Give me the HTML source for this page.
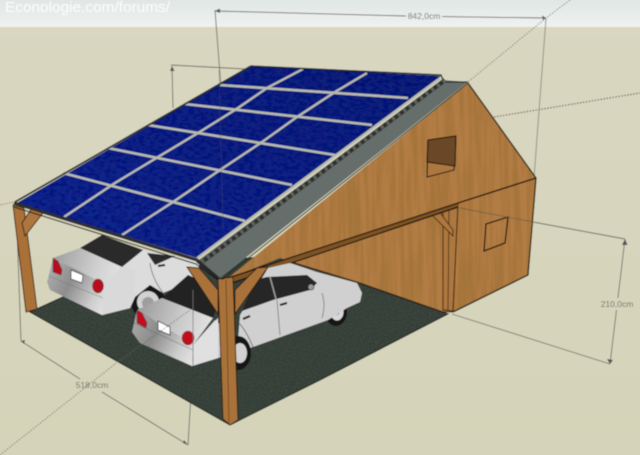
<!DOCTYPE html>
<html><head><meta charset="utf-8"><style>
html,body{margin:0;padding:0;background:#d7d5bd}
svg{display:block;width:640px;height:455px;overflow:hidden}
text{font-family:"Liberation Sans",sans-serif}
</style></head><body>
<svg width="640" height="455" viewBox="0 0 640 455" xmlns="http://www.w3.org/2000/svg">
<defs>
<linearGradient id="sky" x1="0" y1="0" x2="0" y2="1"><stop offset="0" stop-color="#dde4e3"/><stop offset="1" stop-color="#eff2ef"/></linearGradient>
<linearGradient id="gnd" x1="0" y1="0" x2="0" y2="1"><stop offset="0" stop-color="#d9d7c0"/><stop offset="1" stop-color="#d5d3b9"/></linearGradient>
<linearGradient id="pan" x1="0" y1="1" x2="1" y2="0"><stop offset="0" stop-color="#0c2a90"/><stop offset=".5" stop-color="#0a2382"/><stop offset="1" stop-color="#091f76"/></linearGradient>
<linearGradient id="rear1" gradientUnits="userSpaceOnUse" x1="47" y1="280" x2="110" y2="315"><stop offset="0" stop-color="#a8a8a8"/><stop offset=".3" stop-color="#8d8d8d"/><stop offset=".7" stop-color="#cfcfcf"/><stop offset="1" stop-color="#ececec"/></linearGradient>
<linearGradient id="rear2" gradientUnits="userSpaceOnUse" x1="132" y1="330" x2="196" y2="365"><stop offset="0" stop-color="#a4a4a4"/><stop offset=".3" stop-color="#8b8b8b"/><stop offset=".7" stop-color="#cdcdcd"/><stop offset="1" stop-color="#eaeaea"/></linearGradient>
<linearGradient id="trunk1" gradientUnits="userSpaceOnUse" x1="55" y1="258" x2="120" y2="280"><stop offset="0" stop-color="#a0a0a0"/><stop offset=".6" stop-color="#cfcfcf"/><stop offset="1" stop-color="#e4e4e4"/></linearGradient>
<linearGradient id="trunk2" gradientUnits="userSpaceOnUse" x1="140" y1="305" x2="210" y2="330"><stop offset="0" stop-color="#9c9c9c"/><stop offset=".6" stop-color="#cccccc"/><stop offset="1" stop-color="#e2e2e2"/></linearGradient>
<filter id="woodf" x="0" y="0" width="100%" height="100%"><feTurbulence type="fractalNoise" baseFrequency="0.22 0.012" numOctaves="3" seed="7"/><feColorMatrix type="matrix" values="0 0 0 0 .30  0 0 0 0 .15  0 0 0 0 .03  3 0 0 0 -1.150"/></filter>
<filter id="noise" x="0" y="0" width="100%" height="100%"><feTurbulence type="fractalNoise" baseFrequency="0.18 0.3" numOctaves="2" seed="3"/><feColorMatrix type="matrix" values="0 0 0 0 0  0 0 0 0 0  0 0 0 0 .18  3 0 0 0 -1.100"/></filter>
<filter id="gnoise" x="0" y="0" width="100%" height="100%"><feTurbulence type="fractalNoise" baseFrequency="0.8" numOctaves="2" seed="5"/><feColorMatrix type="matrix" values="0 0 0 0 .5  0 0 0 0 .55  0 0 0 0 .5  1.400 0 0 0 -.6"/></filter>
<filter id="soft" x="-2%" y="-2%" width="104%" height="104%"><feGaussianBlur stdDeviation="0.55"/></filter>
<clipPath id="wallc"><path d="M468 83L536 178L528 275L453 312L443 312L360 283L280 258L227 279Z"/></clipPath>
<clipPath id="panc"><path d="M251 66L441 76L197 258L17 203Z"/></clipPath>
<clipPath id="floorc"><path d="M30 312L65 296L190 262L280 256L448 314L320 380L230 425Z"/></clipPath>
</defs>

<g filter="url(#soft)">
<rect x="-5" y="26" width="650" height="435" fill="url(#gnd)"/>
<rect x="-5" y="-5" width="650" height="32" fill="url(#sky)"/>

<g fill="none" stroke="#6e6e66" stroke-width=".9">
<path d="M215 10L222 100"/>
<path d="M215 11L406 16M442 16.600L546 18"/>
<path d="M171 65L245 69M172 66L173 108"/>
<path d="M546 18L534 178" stroke="#8a8a80"/>
<path d="M17 227L21 341"/>
<path d="M21 341L80 379M102 392L188 445"/>
<path d="M193 360L188 445"/>
<path d="M533 222L625 239"/>
<path d="M625 239L610 364"/>
<path d="M452 314L610 364"/>
</g>
<g fill="none" stroke="#77776c" stroke-width=".9" stroke-dasharray="1.500 1.500">
<path d="M570 0L546 18L468 82"/>
<path d="M494 117L640 93" stroke-width="1.200" stroke="#66665c"/>
<path d="M0 455L115 364"/>
<path d="M0 205L14 202"/>
</g>
<g fill="#555"><path d="M215 11L220 8.500L220 13Z"/><path d="M546 18L542 15.500L543 20Z"/><path d="M172 66L170 71L174.500 71Z"/><path d="M21 341L24 344L25 340Z"/><path d="M188 445L184 440L183 443Z"/><path d="M625 239L622 245L627.500 245Z"/><path d="M610 364L607 359L613 360Z"/></g>
<text x="424" y="19" font-size="8.500" fill="#6f7272" text-anchor="middle">842,0cm</text>
<text x="92" y="388" font-size="8.500" fill="#6f6f66" text-anchor="middle">518,0cm</text>
<rect x="604" y="298" width="30" height="12" fill="#d6d4bb"/>
<text x="617" y="307" font-size="8.500" fill="#6f6f66" text-anchor="middle">210,0cm</text>
<text x="5" y="12" font-size="15" fill="#ffffff" textLength="165" lengthAdjust="spacingAndGlyphs" opacity=".95">Econologie.com/forums/</text>

<!-- floor -->
<path d="M30 312L65 296L190 262L280 256L448 314L320 380L230 425Z" fill="#323c35" stroke="#1a1f1b" stroke-width="1"/>
<g clip-path="url(#floorc)"><rect x="20" y="250" width="440" height="180" filter="url(#gnoise)" opacity=".3"/></g>

<!-- wood wall -->
<path d="M468 83L536 178L528 275L453 312L443 312L360 283L280 258L227 279Z" fill="#b27c44"/>
<g clip-path="url(#wallc)"><rect x="220" y="80" width="320" height="240" filter="url(#woodf)" opacity=".5"/></g>
<g fill="none" stroke="#1e140a" stroke-width="1.300"><path d="M468 83L536 178L528 275L453 312"/></g>
<path d="M453 312L443 312L360 283L285 260" fill="none" stroke="#2f2012" stroke-width="1"/>

<!-- post and brace at rear -->
<path d="M443 209L458 204L453 311L443 310Z" fill="#ad773f" stroke="#2a1a0c" stroke-width="1"/>
<path d="M449 208L448 311" stroke="#3a2510" stroke-width=".8"/>
<path d="M430 213L438 210L453 230L453 236Z" fill="#ad773f" stroke="#2a1a0c" stroke-width=".8"/>

<!-- side window -->
<path d="M486 224L508 217L505 243L484 251Z" fill="none" stroke="#241608" stroke-width="1.300"/>
<!-- gable window -->
<path d="M428 140L456 136L454 170L427 177Z" fill="#ad7840" stroke="#1e140a" stroke-width="1.100"/>
<path d="M428 140L456 136L455 166L427 162Z" fill="#6b4725" stroke="#1e140a" stroke-width="1.100"/>

<!-- eave beam -->
<path d="M536 178L458 203" stroke="#1b1108" stroke-width="1.400" fill="none"/>
<path d="M458 203L227 279L229 283L458 208Z" fill="#7c5226"/>
<path d="M458 203L225 279M458 207L232 283" stroke="#1b1108" stroke-width="1.200" fill="none"/>

<!-- car 1 -->
<circle cx="148" cy="302" r="17" fill="#161616"/><circle cx="148" cy="302" r="11" fill="#d2d2d2"/><circle cx="148" cy="303" r="6" fill="#9e9e9e"/>
<path d="M122 267L143 250L200 262L195 280L163 293L150 285L135 297L130 308L102 315L50 290L47 282L53 258Z" fill="#dcdcdc"/>
<path d="M147 253L175 256L155 265Z" fill="#2c2c2c"/>
<path d="M150 263Q152 278 163 293" stroke="#555" stroke-width=".7" fill="none"/>
<path d="M158 266L165 265" stroke="#222" stroke-width="2"/>
<path d="M80 248L102 235L143 250L122 267Z" fill="#2a2a2a"/>
<path d="M53 258L80 248L122 267L103 283Z" fill="url(#trunk1)"/>
<path d="M53 258L103 283L102 315L50 290L47 282Z" fill="url(#rear1)"/>
<path d="M103 283L122 267L135 270L135 297L130 308L102 315Z" fill="#d9d9d9"/>
<path d="M49 276L103 298" fill="none" stroke="#777" stroke-width=".5"/>
<path d="M53 258L58 261L62 270L61 275L53 272Z" fill="#b70f1e" stroke="#333" stroke-width=".5"/>
<ellipse cx="98" cy="286" rx="5.500" ry="7" fill="#b70f1e" stroke="#333" stroke-width=".5"/>
<path d="M71 270L83 275L82 283L71 279Z" fill="#fff" stroke="#333" stroke-width=".7"/>

<!-- car 2 -->
<ellipse cx="336" cy="312" rx="11" ry="14" fill="#161616"/><ellipse cx="337" cy="312" rx="6.500" ry="8.500" fill="#d8d8d8"/><circle cx="337" cy="312" r="3" fill="#a4a4a4"/>
<path d="M238 340L240 315L268 268L290 263L317 272L357 283L362 293L360 302L347 308L328 320L253 347L218 358L192 366L193 345L215 320Z" fill="#d0d0d0"/>
<ellipse cx="238" cy="353" rx="13" ry="17" fill="#161616"/><ellipse cx="240" cy="353" rx="7" ry="10" fill="#d2d2d2"/>
<path d="M238 322Q246 330 253 347" stroke="#555" stroke-width=".8" fill="none"/>
<path d="M242 311L255 280L267 277L307 275L317 283L310 290L273 300Z" fill="#262626"/>
<path d="M270 277L276 299" stroke="#999" stroke-width="1.500"/>
<path d="M277 300L280 335M322 293Q326 305 322 318" stroke="#666" stroke-width=".7" fill="none"/>
<path d="M243 319L250 316M280 305L287 303" stroke="#222" stroke-width="2.200"/>
<circle cx="311" cy="287" r="3" fill="#999" stroke="#222" stroke-width=".6"/>
<path d="M162 298L188 275L222 290L213 318Z" fill="#232323"/>
<path d="M137 310L162 298L213 318L193 345Z" fill="url(#trunk2)"/>
<path d="M137 310L193 345L192 366L140 343L132 332Z" fill="url(#rear2)"/>
<path d="M193 345L218 318L218 358L192 366Z" fill="#e0e0e0"/>
<path d="M137 310L142 313L147 323L146 328L137 323Z" fill="#c20e1f" stroke="#333" stroke-width=".5"/>
<ellipse cx="188" cy="338" rx="6" ry="7" fill="#c20e1f" stroke="#333" stroke-width=".5"/>
<path d="M158 321L170 327L170 335L158 330Z" fill="#fff" stroke="#333" stroke-width=".8"/>
<path d="M134 323L193 350" stroke="#666" stroke-width=".5" fill="none"/>
<path d="M115 364L190 310" stroke="#66665e" stroke-width=".7" stroke-dasharray="1.500 1.500" fill="none"/>
<path d="M193 366L193 290" stroke="#777" stroke-width=".7"/>

<!-- left post -->
<path d="M13 205L24 208L37 309L26 312Z" fill="#a97038" stroke="#2a1a0c" stroke-width=".9"/>
<path d="M43 213L32 208L22 223L25 236Z" fill="#ad7540" stroke="#2a1a0c" stroke-width=".9"/>
<!-- front post & braces -->
<path d="M187 267L199 268L218 290L218 314Z" fill="#a9723a" stroke="#2a1a0c" stroke-width=".9"/>
<path d="M268 267L257 268L235 290L235 314Z" fill="#a9723a" stroke="#2a1a0c" stroke-width=".9"/>
<path d="M218 279L233 277L238 420L230 425L223 419Z" fill="#a9723a" stroke="#2a1a0c" stroke-width=".9"/>
<path d="M226 280L229 423" stroke="#6c4217" stroke-width=".8"/>

<!-- gray strip -->
<path d="M443 80L468 82L220 278L196 262Z" fill="#666e6c"/>
<path d="M443 82L468 82" stroke="#222" stroke-width="1.200"/>
<path d="M468 83L222 279" stroke="#2a2a22" stroke-width="1"/>

<!-- panels -->
<path d="M251 66L441 76L197 258L17 203Z" fill="url(#pan)"/>
<g clip-path="url(#panc)"><rect x="10" y="60" width="440" height="205" filter="url(#noise)" opacity=".45"/></g>
<g fill="none" stroke="#b7b9b0" stroke-width="2.600">
<path d="M220 85L408 98M185 104L372 125M148 125L335 155M108 148L292 185M63 173L245 221"/>
<path d="M303 69L267 88L238 108L198 133L158 157L115 183L64 217" stroke-width="2.300"/>
<path d="M367 73L335 92L297 117L262 142L220 170L173 202L122 235" stroke-width="2.300"/>
<path d="M440 78L197 258" stroke-width="2.200"/>
</g>
<!-- hatched band -->
<path d="M445 80L202 262" stroke="#2e302e" stroke-width="4.500" fill="none"/>
<path d="M445 80L202 262" stroke="#5f625e" stroke-width="4" fill="none" stroke-dasharray="3 4"/>
<!-- roof edges -->
<path d="M251 66L441 75L443 80" stroke="#222" stroke-width="1.400" fill="none"/>
<path d="M251 66L15 202" stroke="#2c2c2c" stroke-width="1.800" fill="none"/>
<path d="M14 203L197 260L218 278" stroke="#2f2f2f" stroke-width="3.200" fill="none"/>
<path d="M14 207L196 264L218 280" stroke="#111" stroke-width="1" fill="none"/>
<path d="M197 262L218 278L224 279" stroke="#222" stroke-width="1.200" fill="none"/>

<path d="M219 70L223 228" stroke="#555" stroke-width=".7" fill="none" opacity=".45"/>
<path d="M460 208L533 222" stroke="#6e5a44" stroke-width=".7" fill="none"/>
</g>
</svg>
</body></html>
